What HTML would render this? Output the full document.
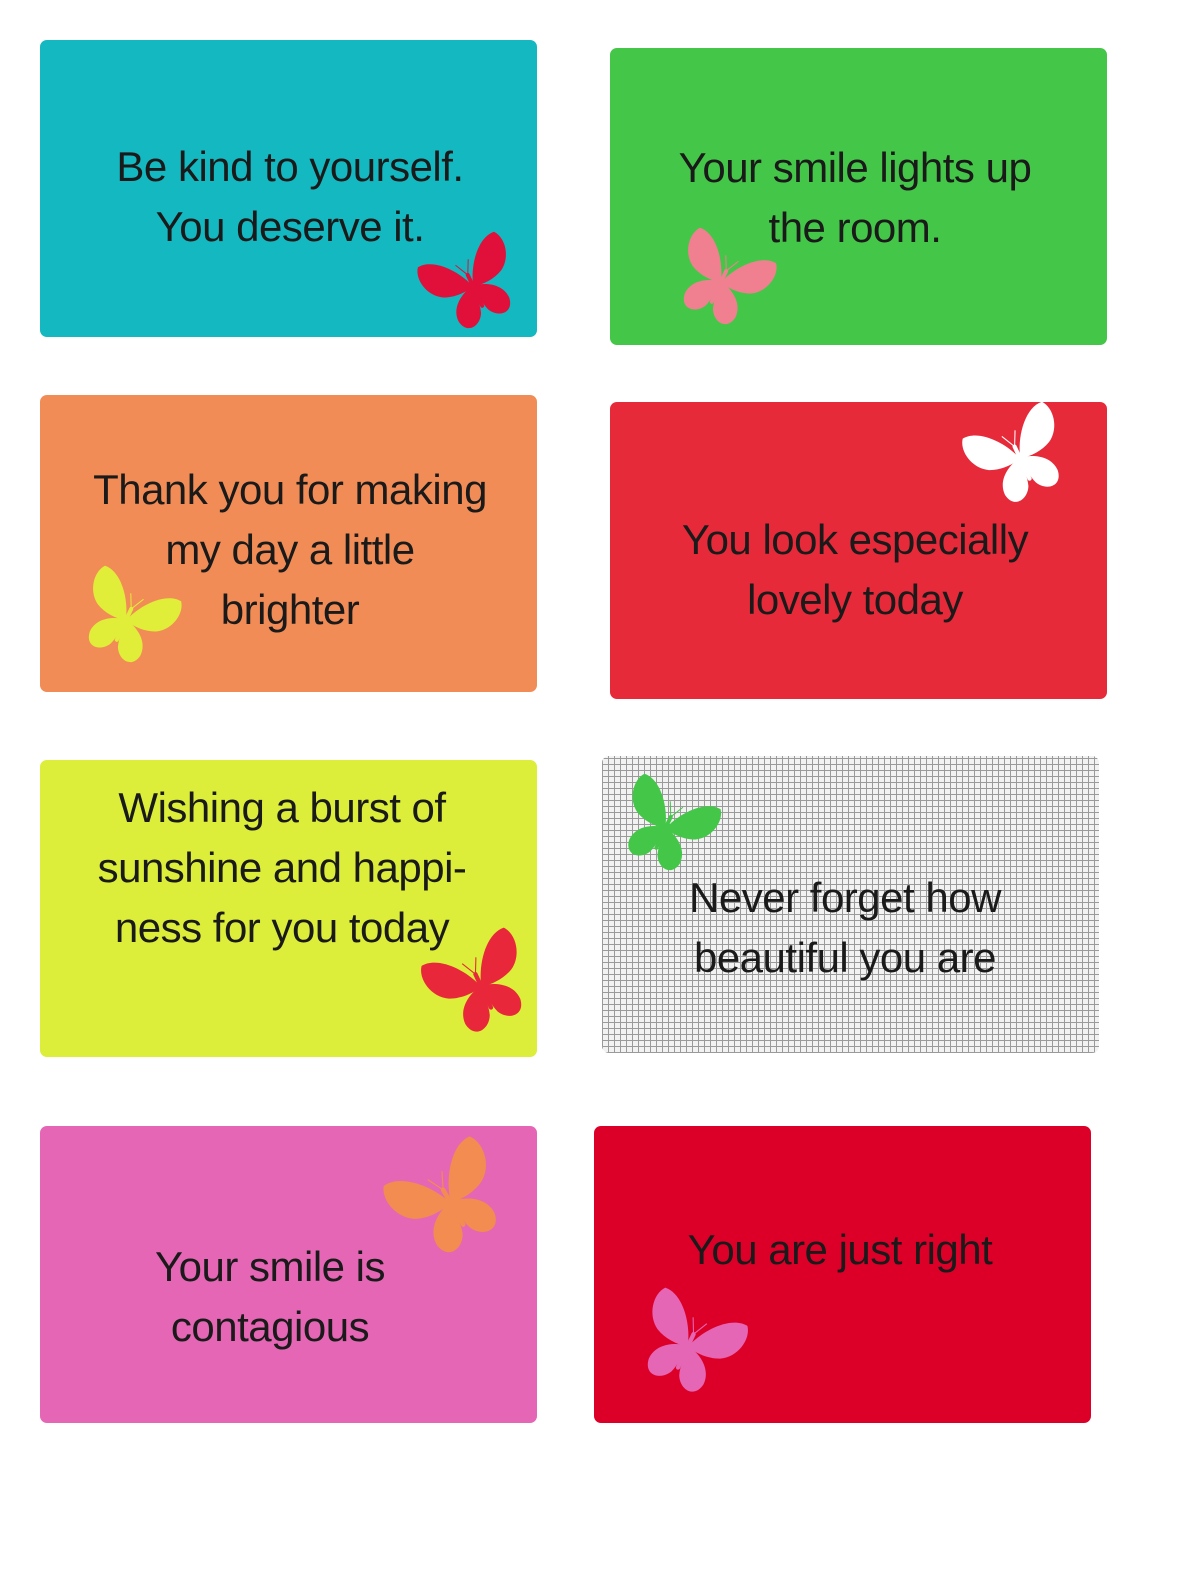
<!DOCTYPE html>
<html><head><meta charset="utf-8"><style>
body{margin:0;width:1200px;height:1575px;background:#fff;position:relative;overflow:hidden;font-family:"Liberation Sans",sans-serif}
.c{position:absolute;width:497px;height:297px;border-radius:7px}
.t{position:absolute;font-size:42px;line-height:60px;color:#1a1a1a;text-align:center;width:500px;letter-spacing:-0.5px}
svg.b{position:absolute}
</style></head><body>
<svg width="0" height="0" style="position:absolute"><defs>
<symbol id="bf" viewBox="0 0 100 100">
<path d="M49 50C42 30 24 10 8 12C0 22 4 42 18 50C28 55 40 55 49 53Z"/>
<path d="M51 50C58 30 76 10 92 12C100 22 96 42 82 50C72 55 60 55 51 53Z"/>
<path d="M49 52C38 54 22 62 22 78C24 94 40 92 46 80C49 72 49 62 49 56Z"/>
<path d="M51 52C62 54 78 62 78 78C76 94 60 92 54 80C51 72 51 62 51 56Z"/>
<rect x="48" y="38" width="4" height="38" rx="2"/>
<path d="M50 40L43 26M50 40L57 26" stroke="currentColor" stroke-width="1" fill="none"/>
</symbol></defs></svg>

<div class="c" style="left:40px;top:40px;background:#13b8c0"></div>
<div class="c" style="left:610px;top:48px;background:#44c649"></div>
<div class="c" style="left:40px;top:395px;background:#f28c56"></div>
<div class="c" style="left:610px;top:402px;background:#e62a3a"></div>
<div class="c" style="left:40px;top:760px;background:#dcee3a"></div>
<div class="c" style="left:602px;top:756px;background-color:#f2f2f2;background-image:repeating-linear-gradient(0deg,#9a9a9a 0 1px,transparent 1px 6px),repeating-linear-gradient(90deg,#9a9a9a 0 1px,transparent 1px 6px)"></div>
<div class="c" style="left:40px;top:1126px;background:#e466b4"></div>
<div class="c" style="left:594px;top:1126px;background:#dc0029"></div>

<div class="t" style="left:40px;top:137px">Be kind to yourself.<br>You deserve it.</div>
<div class="t" style="left:605px;top:138px">Your smile lights up<br>the room.</div>
<div class="t" style="left:40px;top:460px">Thank you for making<br>my day a little<br>brighter</div>
<div class="t" style="left:605px;top:510px">You look especially<br>lovely today</div>
<div class="t" style="left:32px;top:778px">Wishing a burst of<br>sunshine and happi-<br>ness for you today</div>
<div class="t" style="left:595px;top:868px">Never forget how<br>beautiful you are</div>
<div class="t" style="left:20px;top:1237px">Your smile is<br>contagious</div>
<div class="t" style="left:590px;top:1220px">You are just right</div>

<svg class="b" style="left:422px;top:234px;color:#e0103a;fill:#e0103a;transform:rotate(-25deg)" width="100" height="100"><use href="#bf"/></svg>
<svg class="b" style="left:668px;top:230px;color:#f08090;fill:#f08090;transform:rotate(25deg)" width="108" height="100"><use href="#bf"/></svg>
<svg class="b" style="left:77px;top:568px;color:#e0ee3a;fill:#e0ee3a;transform:rotate(25deg)" width="100" height="100"><use href="#bf"/></svg>
<svg class="b" style="left:966px;top:404px;color:#fff;fill:#fff;transform:rotate(-25deg)" width="106" height="104"><use href="#bf"/></svg>
<svg class="b" style="left:426px;top:930px;color:#e8283a;fill:#e8283a;transform:rotate(-25deg)" width="108" height="108"><use href="#bf"/></svg>
<svg class="b" style="left:615px;top:776px;color:#44c649;fill:#44c649;transform:rotate(25deg)" width="103" height="100"><use href="#bf"/></svg>
<svg class="b" style="left:390px;top:1140px;color:#f28c50;fill:#f28c50;transform:rotate(-30deg)" width="118" height="120"><use href="#bf"/></svg>
<svg class="b" style="left:627px;top:1290px;color:#e466b4;fill:#e466b4;transform:rotate(25deg)" width="124" height="108"><use href="#bf"/></svg>
</body></html>
